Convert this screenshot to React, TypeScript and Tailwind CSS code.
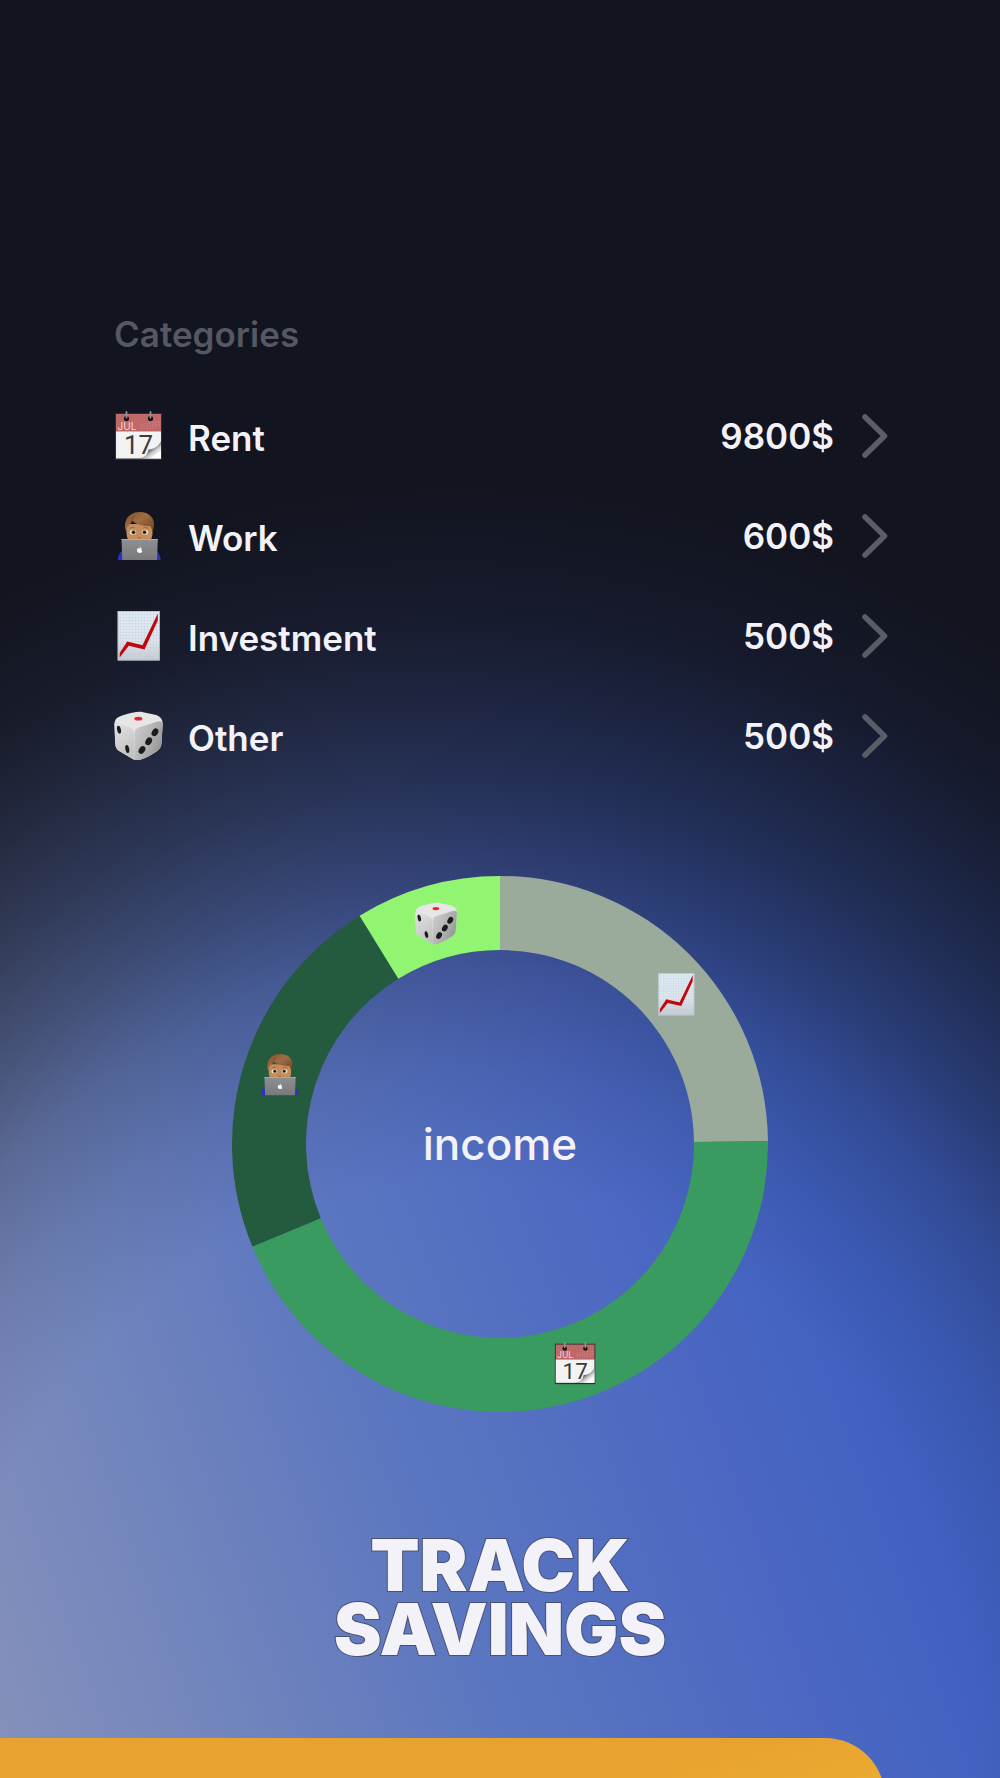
import { useId } from "react";

interface IconProps {
  className?: string;
  x?: number;
  y?: number;
  width?: number;
  height?: number;
}

const CalendarIcon = (props: IconProps) => {
  const id = useId();

  return (
    <svg viewBox="0 0 50 50" aria-hidden="true" {...props}>
      <defs>
        <linearGradient id={`${id}curl`} x1="0" y1="0" x2="1" y2="1">
          <stop offset="0.3" stopColor="#e4e4e4" />
          <stop offset="0.45" stopColor="#4d4d4d" />
          <stop offset="0.62" stopColor="#c4c4c4" />
          <stop offset="0.8" stopColor="#ffffff" />
        </linearGradient>
      </defs>
      <rect x="1" y="2" width="47" height="47" fill="#2e2d2e" />
      <rect x="2" y="3" width="45" height="18" fill="#bf686a" />
      <rect x="2" y="20.5" width="45" height="27" fill="#f3f3f3" />
      <path
        d="M27 13v5M30 12v6M33 11.5v6.5M36 11v7M39 10.5v7M42 10v7M45 10v6"
        stroke="#d58d8e"
        strokeWidth="0.8"
        strokeDasharray="2 0.7"
      />
      <text
        x="3.5"
        y="18.5"
        fill="#f3d6d6"
        fontSize="10"
        fontWeight="400"
        fontFamily="Inter, sans-serif"
      >
        JUL
      </text>
      <text
        x="10"
        y="43"
        fill="#3b3b3b"
        fontSize="26"
        fontWeight="400"
        fontFamily="Roboto, sans-serif"
      >
        17
      </text>
      <path
        d="M25 47.5c6-1 8-3 9.5-9 4 0 9-2 12.5-8v17z"
        fill={`url(#${id}curl)`}
      />
      <circle cx="12.5" cy="7.5" r="2.6" fill="#121212" />
      <circle cx="36.5" cy="7.5" r="2.6" fill="#121212" />
      <path
        d="M12.5 1v5.5M36.5 1v5.5"
        stroke="#8d989c"
        strokeWidth="1.8"
        strokeLinecap="round"
      />
    </svg>
  );
};

const WorkerIcon = (props: IconProps) => {
  const id = useId();

  return (
    <svg viewBox="0 0 50 50" aria-hidden="true" {...props}>
      <defs>
        <linearGradient id={`${id}hair`} x1="0" y1="0" x2="1" y2="1">
          <stop offset="0" stopColor="#80502c" />
          <stop offset="0.45" stopColor="#a06c42" />
          <stop offset="1" stopColor="#6b3f20" />
        </linearGradient>
        <linearGradient id={`${id}lid`} x1="0" y1="0" x2="0" y2="1">
          <stop offset="0" stopColor="#8e9094" />
          <stop offset="1" stopColor="#77797d" />
        </linearGradient>
      </defs>
      <path
        d="M3.7 49c.3-5 2.3-8.5 6-10h31c3.7 1.5 5.7 5 6 10z"
        fill="#2a31c4"
      />
      <path d="M12.5 13h26v9c0 8-5 12-13 12s-13-4-13-12z" fill="#c58d5f" />
      <path
        d="M12.5 21.5C9 14 12 6 17 3.5 21 .5 29 .2 34 3c6 3.5 7.500 10 4.5 18-.4-2.500-1-4.500-2.500-6-6 .5-13-1-18-5-1 3-3.500 4-4.500 6-.7 1.500-.8 3-1 5.500z"
        fill={`url(#${id}hair)`}
      />
      <path
        d="M18 10c.2-2 .7-3.5 2-5"
        fill="none"
        stroke="#6d401f"
        strokeWidth="0.8"
      />
      <path
        d="M16 17.3c1.500-1 3-1 4.500-.4M29.500 16.900c1.500-.6 3-.6 4.500.4"
        fill="none"
        stroke="#8d5a34"
        strokeWidth="0.8"
        strokeLinecap="round"
      />
      <ellipse cx="19" cy="21.3" rx="3.2" ry="2.5" fill="#efe3cc" />
      <ellipse cx="31" cy="21.3" rx="3.2" ry="2.5" fill="#efe3cc" />
      <circle cx="19.5" cy="21.2" r="2" fill="#7a5a1c" />
      <circle cx="30.5" cy="21.2" r="2" fill="#7a5a1c" />
      <circle cx="19.5" cy="21.2" r="1.2" fill="#15100a" />
      <circle cx="30.5" cy="21.2" r="1.2" fill="#15100a" />
      <path
        d="M23.5 26.6q1.7 1 3.4 0"
        fill="none"
        stroke="#9c6238"
        strokeWidth="1"
      />
      <path d="M7.5 28h36.3l-.8 21H8.3z" fill={`url(#${id}lid)`} />
      <path d="M7.5 28h36.3v1H7.5z" fill="#a9abaf" />
      <path
        d="M25.5 37.5c1-.6 2-.4 2.5.2-.9.8-.8 2 .2 2.6-.5 1.3-1.4 1.9-2.6 1.4-1.4.5-2.6-.8-2.6-2.5 0-1.6 1.3-2.3 2.5-1.7zM25.5 37c0-1 .6-1.5 1.3-1.6 0 .9-.4 1.5-1.3 1.6z"
        fill="#ffffff"
      />
    </svg>
  );
};

const TrendIcon = (props: IconProps) => {
  const id = useId();

  return (
    <svg viewBox="0 0 50 50" aria-hidden="true" {...props}>
      <defs>
        <linearGradient id={`${id}sheet`} x1="0" y1="0" x2="0" y2="1">
          <stop offset="0" stopColor="#dfebf5" />
          <stop offset="0.6" stopColor="#dfe5ec" />
          <stop offset="1" stopColor="#c6cad1" />
        </linearGradient>
        <pattern
          id={`${id}grid`}
          width="3"
          height="3"
          patternUnits="userSpaceOnUse"
        >
          <path d="M0 0h3M0 0v3" stroke="#b9cddc" strokeWidth="0.6" />
        </pattern>
      </defs>
      <rect x="3.7" y="0" width="42" height="49.5" fill={`url(#${id}sheet)`} />
      <rect
        x="4"
        y="0.4"
        width="41.4"
        height="48.7"
        fill={`url(#${id}grid)`}
        stroke="#aeb8c1"
        strokeWidth="0.7"
      />
      <path
        d="M5.7 42 13.2 30.5l15.3 3.7L43.8 2.5v7L30.5 38.5 14.8 34.8 5.7 46.5z"
        fill="#c3060b"
      />
    </svg>
  );
};

const DiceIcon = (props: IconProps) => {
  const id = useId();

  return (
    <svg viewBox="0 0 50 50" aria-hidden="true" {...props}>
      <defs>
        <linearGradient id={`${id}left`} x1="0" y1="0" x2="0.4" y2="1">
          <stop offset="0" stopColor="#e4e4e4" />
          <stop offset="1" stopColor="#c2c2c2" />
        </linearGradient>
        <linearGradient id={`${id}right`} x1="0" y1="0" x2="1" y2="0.6">
          <stop offset="0" stopColor="#cfcfcf" />
          <stop offset="0.5" stopColor="#b8b8b8" />
          <stop offset="1" stopColor="#969696" />
        </linearGradient>
      </defs>
      <path
        d="M.5 14C.5 8 3 6 9 4.2 17 1.8 23 .3 28 .9l12 2.6c6 1.5 8.6 4 8.7 9.5L47.5 32c-.4 4-1.5 6-5 8.5-6 4-11 6.500-15.5 8-3.5.9-6.5.5-10-1.5L6 40.5C2.5 38.5 1.5 36 1.2 32z"
        fill="#e6e6e6"
      />
      <path
        d="M.5 14c0-4 1.5-3.500 4-2.2l11 4.7c3.5 1.5 4.5 3 4.6 7L21 49c-1.5-.3-3-1.2-4-2L6 40.5C2.5 38.5 1.5 36 1.2 32z"
        fill={`url(#${id}left)`}
      />
      <path
        d="M20.5 23.5c0-4 1-6 5-7.3l17-5.4c4-1.3 6.2-.8 6.2 2.2L47.5 32c-.4 4-1.5 6-5 8.500-6 4-11 6.5-15.5 8-2.5.6-4.5.7-6 .5z"
        fill={`url(#${id}right)`}
      />
      <ellipse cx="24.3" cy="7.7" rx="4" ry="1.9" fill="#e3242b" />
      <ellipse
        cx="5"
        cy="18.7"
        rx="1.9"
        ry="4"
        fill="#1b1b1b"
        transform="rotate(-12 5 18.7)"
      />
      <ellipse
        cx="13.3"
        cy="38"
        rx="1.9"
        ry="4"
        fill="#1b1b1b"
        transform="rotate(-12 13.3 38)"
      />
      <ellipse
        cx="41"
        cy="21.3"
        rx="3"
        ry="4.2"
        fill="#1b1b1b"
        transform="rotate(32 41 21.3)"
      />
      <ellipse
        cx="34.7"
        cy="30.3"
        rx="3"
        ry="4.2"
        fill="#1b1b1b"
        transform="rotate(32 34.7 30.3)"
      />
      <ellipse
        cx="28"
        cy="39"
        rx="3"
        ry="4.2"
        fill="#1b1b1b"
        transform="rotate(32 28 39)"
      />
    </svg>
  );
};

const categories = [
  { name: "Rent", amount: 9800, Icon: CalendarIcon },
  { name: "Work", amount: 600, Icon: WorkerIcon },
  { name: "Investment", amount: 500, Icon: TrendIcon },
  { name: "Other", amount: 500, Icon: DiceIcon },
];

// Angles run clockwise from the top of the ring
const slices = [
  { from: 0, to: 89.4, color: "#9aaa9b", Icon: TrendIcon, x: 444, y: 118 },
  { from: 89.4, to: 247.5, color: "#399b5f", Icon: CalendarIcon, x: 343, y: 487 },
  { from: 247.5, to: 328.4, color: "#245b3f", Icon: WorkerIcon, x: 47, y: 198 },
  { from: 328.4, to: 360, color: "#92f571", Icon: DiceIcon, x: 204, y: 47 },
];

const CENTER = 268;
const OUTER = 268;
const INNER = 194;

const point = (radius: number, angle: number) => {
  const rad = (angle * Math.PI) / 180;
  return `${CENTER + radius * Math.sin(rad)} ${CENTER - radius * Math.cos(rad)}`;
};

const slicePath = (from: number, to: number) => {
  const large = to - from > 180 ? 1 : 0;
  return `M${point(OUTER, from)}A${OUTER} ${OUTER} 0 ${large} 1 ${point(OUTER, to)}L${point(INNER, to)}A${INNER} ${INNER} 0 ${large} 0 ${point(INNER, from)}Z`;
};

const CategoryList = () => (
  <section className="pr-28 pl-[114px]">
    <h2 className="text-[35px] leading-12 font-semibold text-[#555762]">
      Categories
    </h2>
    <ul className="mt-7">
      {categories.map(({ name, amount, Icon }) => (
        <li key={name}>
          <button
            type="button"
            className="flex h-[100px] w-full items-center text-left text-[35px] leading-12 font-semibold text-[#f3f2f9]"
          >
            <Icon className="size-[50px] shrink-0" />
            <span className="ml-6 flex-1 pt-1">{name}</span>
            <span>{amount}$</span>
            <svg
              viewBox="0 0 26 44"
              className="ml-7 h-11 w-[26px] shrink-0"
              fill="none"
              stroke="#5a5c67"
              strokeWidth="5.5"
              strokeLinecap="round"
              strokeLinejoin="round"
              aria-hidden="true"
            >
              <path d="M3 3 22.5 22 3 41" />
            </svg>
          </button>
        </li>
      ))}
    </ul>
  </section>
);

const IncomeChart = () => (
  <section className="relative mx-auto mt-[90px] size-[536px]">
    <svg viewBox="0 0 536 536" className="size-full" aria-hidden="true">
      {slices.map(({ from, to, color, Icon, x, y }) => (
        <g key={color}>
          <path d={slicePath(from, to)} fill={color} />
          <Icon x={x - 21} y={y - 21} width={43} height={43} />
        </g>
      ))}
    </svg>
    <p className="absolute inset-0 flex items-center justify-center text-[44px] leading-12 font-medium text-[#f3f2f9]">
      income
    </p>
  </section>
);

export default function App() {
  return (
    <main className="relative isolate flex min-h-screen flex-col overflow-hidden bg-[#12141f] pt-[310px] font-[Inter,sans-serif]">
      <div className="absolute inset-0 -z-10 bg-[linear-gradient(70deg,#8691bb,#7084bd_16%,#5c77c0_31%,#4b67c2_51%,#3f60c1_63%,#3354b0)]" />
      <div className="absolute inset-0 -z-10 bg-[radial-gradient(108%_70%_at_46%_100%,#12141f00_48%,#12141f1a_57%,#12141f40_65%,#12141f74_72%,#12141fa8_80%,#12141fcc_87%,#12141feb_94%,#12141f_104%)]" />

      <CategoryList />
      <IncomeChart />

      <h1 className="mt-[121px] text-center text-[72px] leading-16 font-black text-[#f3f2f9] [paint-order:stroke_fill] [-webkit-text-stroke:2px_#4a5070]">
        <span className="block">TRACK</span>
        <span className="block">SAVINGS</span>
      </h1>

      <div className="mt-auto h-10 overflow-hidden">
        <div className="mr-[115px] h-24 rounded-tr-[60px] bg-[linear-gradient(165deg,#e8a22f_60%,#ebb132)]" />
      </div>
    </main>
  );
}
